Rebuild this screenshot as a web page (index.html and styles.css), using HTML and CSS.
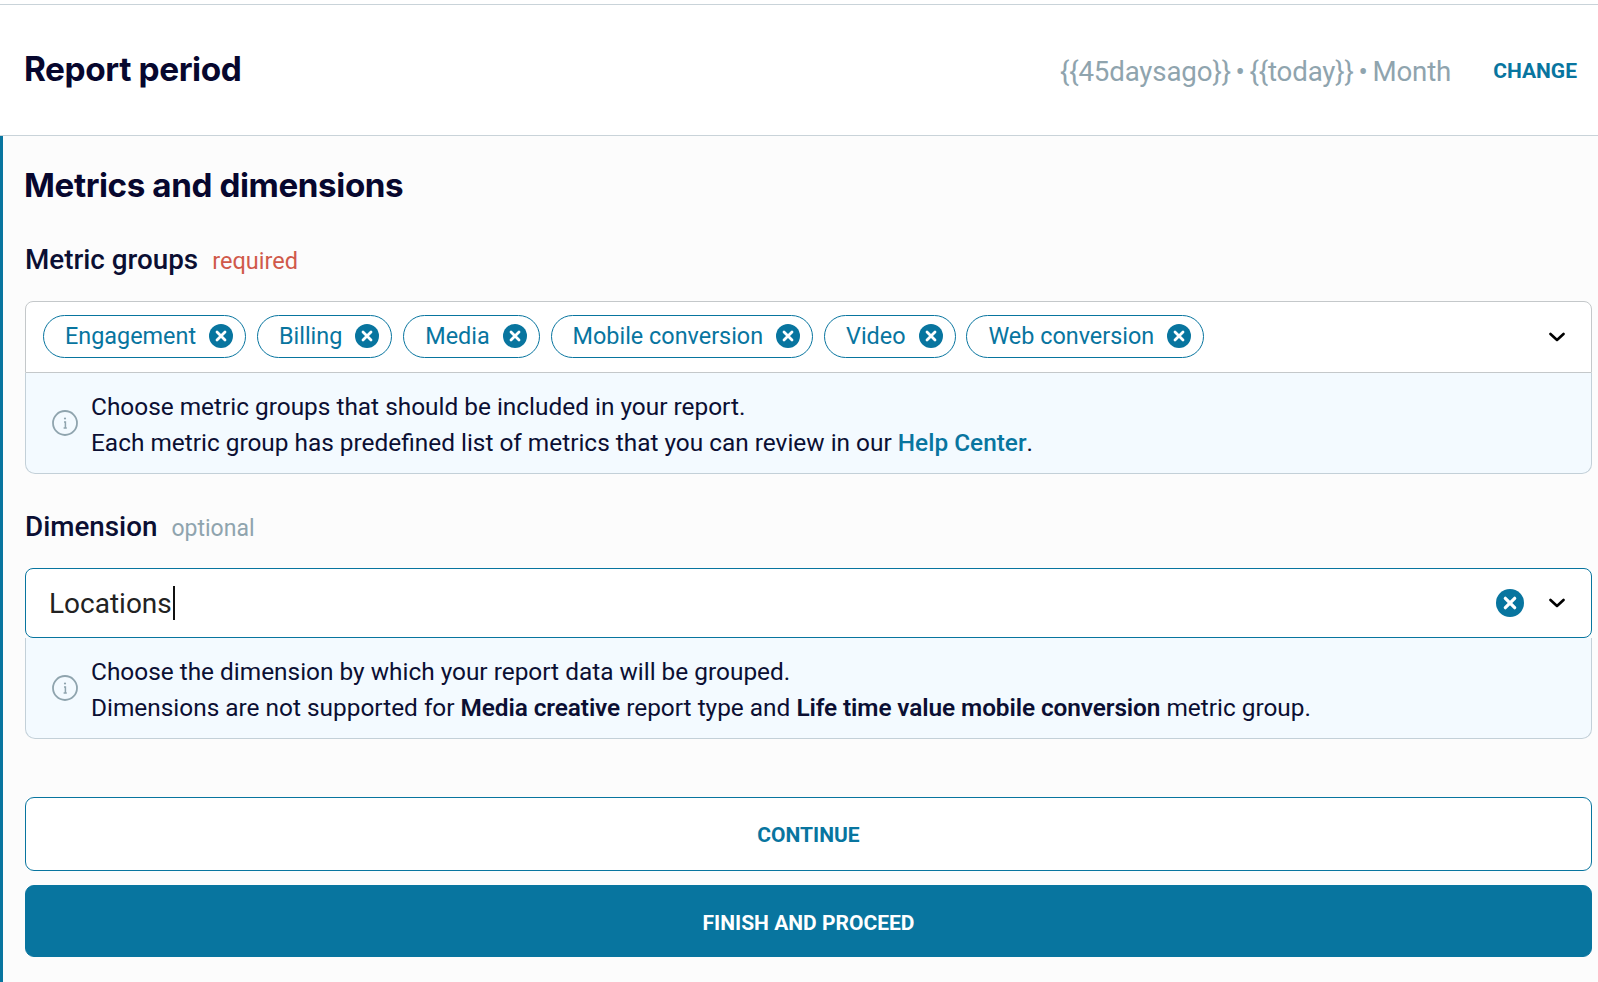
FILE: index.html
```html
<!DOCTYPE html>
<html>
<head>
    <title>Report settings</title>
    <meta charset="utf-8">
    <link rel="stylesheet" href="styles.css">
</head>
<body>
    <svg class="defs" width="0" height="0">
        <symbol id="clear" viewBox="0 0 24 24">
            <circle cx="12" cy="12" r="12" fill="#08759f"/>
            <path d="M8 8l8 8M16 8l-8 8" stroke="#fff" stroke-width="2.8" stroke-linecap="round" fill="none"/>
        </symbol>
        <symbol id="chev" viewBox="0 0 16 10">
            <path d="M1.5 2l6.5 6 6.5-6" stroke="#000" stroke-width="2.6" stroke-linecap="round" stroke-linejoin="round" fill="none"/>
        </symbol>
        <symbol id="info" viewBox="0 0 26 26">
            <circle cx="13" cy="13" r="12" stroke="#8fa4ae" stroke-width="1.8" fill="none"/>
            <path d="M12 12h1.400v6M11.600 18h3.200" stroke="#8fa4ae" stroke-width="1.500" fill="none"/>
            <circle cx="13" cy="8.500" r="1.100" fill="#8fa4ae"/>
        </symbol>
    </svg>

    <div class="period">
        <h2 class="title">Report period</h2>
        <div class="period-right">
            <span class="period-val">{{45daysago}} • {{today}} • Month</span>
            <a class="change" href="#">CHANGE</a>
        </div>
    </div>

    <div class="section">
        <h2 class="title sub">Metrics and dimensions</h2>

        <div class="label-row">
            <span class="label">Metric groups</span>
            <span class="req">required</span>
        </div>
        <div class="field">
            <div class="select">
                <div class="chips">
                    <span class="chip">Engagement <svg class="chip-x"><use href="#clear"/></svg></span>
                    <span class="chip">Billing <svg class="chip-x"><use href="#clear"/></svg></span>
                    <span class="chip">Media <svg class="chip-x"><use href="#clear"/></svg></span>
                    <span class="chip">Mobile conversion <svg class="chip-x"><use href="#clear"/></svg></span>
                    <span class="chip">Video <svg class="chip-x"><use href="#clear"/></svg></span>
                    <span class="chip">Web conversion <svg class="chip-x"><use href="#clear"/></svg></span>
                </div>
                <svg class="chev"><use href="#chev"/></svg>
            </div>
            <div class="hint">
                <svg class="hint-icon"><use href="#info"/></svg>
                <p>Choose metric groups that should be included in your report.<br>
                Each metric group has predefined list of metrics that you can review in our <a href="#">Help Center</a>.</p>
            </div>
        </div>

        <div class="label-row">
            <span class="label">Dimension</span>
            <span class="opt">optional</span>
        </div>
        <div class="field">
            <div class="select focused">
                <span class="value">Locations</span>
                <svg class="clear-x"><use href="#clear"/></svg>
                <svg class="chev"><use href="#chev"/></svg>
            </div>
            <div class="hint">
                <svg class="hint-icon"><use href="#info"/></svg>
                <p>Choose the dimension by which your report data will be grouped.<br>
                Dimensions are not supported for <b>Media creative</b> report type and <b>Life time value mobile conversion</b> metric group.</p>
            </div>
        </div>

        <button class="btn">CONTINUE</button>
        <button class="btn primary">FINISH AND PROCEED</button>
    </div>
</body>
</html>
```

FILE: styles.css
```css
html, body {
    margin: 0;
    padding: 0;
}
body {
    height: 982px;
    overflow: hidden;
    background: #fff;
    color: #0b0f33;
    font-family: "Roboto", "Liberation Sans", sans-serif;
}
.defs {
    display: block;
}
.period {
    margin-top: 4px;
    height: 130px;
    border-top: 1px solid #c9d3d9;
    border-bottom: 1px solid #c9d3d9;
    display: flex;
    align-items: center;
    justify-content: space-between;
    padding: 0 21px 0 24px;
}
.title {
    margin: 0 0 2px;
    font-family: "Inter", sans-serif;
    font-size: 33.4px;
    font-weight: 700;
    letter-spacing: -0.4px;
    color: #07072e;
}
.period-right {
    display: flex;
    align-items: center;
    gap: 42px;
}
.period-val {
    margin-top: 2px;
    font-size: 27.7px;
    letter-spacing: -0.15px;
    word-spacing: -2px;
    color: #8fa4ae;
}
.change {
    margin-top: 2px;
    font-size: 21px;
    font-weight: 700;
    color: #08759f;
    text-decoration: none;
}
.section {
    height: 846px;
    border-left: 3px solid #08759f;
    background: #fcfcfc;
    padding: 0 6px 0 22px;
}
.sub {
    margin: 0 0 0 -1px;
    padding-top: 29px;
    font-size: 33.2px;
    line-height: 40px;
}
.label-row {
    display: flex;
    align-items: baseline;
    gap: 14px;
    height: 34px;
    margin-top: 38px;
    line-height: 34px;
}
.field + .label-row {
    margin-top: 36px;
}
.label {
    font-size: 27.8px;
    font-weight: 500;
}
.req {
    font-size: 23.5px;
    color: #d0594a;
}
.opt {
    font-size: 23px;
    color: #8fa4ae;
}
.field {
    margin-top: 24px;
}
.select {
    height: 72px;
    box-sizing: border-box;
    border: 1px solid #c4c8ca;
    border-radius: 8px 8px 0 0;
    background: #fff;
    display: flex;
    align-items: center;
    padding: 0 16px 0 17px;
}
.select.focused {
    height: 70px;
    border: 1px solid #08759f;
    border-radius: 8px;
    padding-left: 23px;
}
.chips {
    display: flex;
    gap: 10.9px;
    flex: 1;
    margin-top: -2px;
}
.chip {
    height: 43px;
    box-sizing: border-box;
    border: 1px solid #08759f;
    border-radius: 22px;
    padding: 0 12px 0 21px;
    display: flex;
    align-items: center;
    gap: 13px;
    font-size: 23.4px;
    color: #08759f;
}
.chip-x {
    width: 24px;
    height: 24px;
}
.chev {
    width: 16px;
    height: 10px;
    margin-right: 10px;
}
.value {
    flex: 1;
    font-size: 28px;
    color: #222;
}
.value::after {
    content: "";
    display: inline-block;
    width: 2px;
    height: 34px;
    margin-left: 1px;
    vertical-align: -7px;
    background: #111;
}
.clear-x {
    width: 28px;
    height: 28px;
    margin-right: 25px;
}
.hint {
    height: 101px;
    box-sizing: border-box;
    border: 1px solid #c3d0d8;
    border-top: 0;
    border-radius: 0 0 10px 10px;
    background: #f3faff;
    display: flex;
    align-items: center;
    padding-left: 26px;
}
.hint-icon {
    width: 26px;
    height: 26px;
    margin-right: 13px;
    flex: none;
}
.hint p {
    margin: 0;
    padding-top: 4px;
    font-size: 24.4px;
    line-height: 36px;
}
.hint a {
    color: #08759f;
    font-weight: 500;
    text-decoration: none;
}
.hint b {
    font-weight: 600;
    letter-spacing: -0.1px;
}
.btn {
    display: block;
    width: 100%;
    box-sizing: border-box;
    height: 74px;
    margin-top: 58px;
    padding-top: 2px;
    border: 1px solid #08759f;
    border-radius: 9px;
    background: #fff;
    color: #08759f;
    font-family: inherit;
    font-size: 21px;
    font-weight: 700;
}
.btn.primary {
    margin-top: 14px;
    height: 72px;
    padding-top: 4px;
    background: #08759f;
    color: #fff;
}
```
